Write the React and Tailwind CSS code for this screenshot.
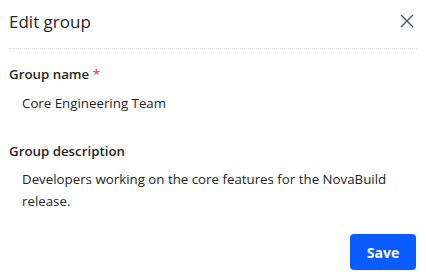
import React from 'react';

const App = () => {
  return (
    <div className="w-[426px] h-[279px] bg-white text-[#1f2328]" style={{ fontFamily: '"Segoe UI", "Open Sans", "Noto Sans", sans-serif' }}>
      <div className="flex items-center justify-between pl-[9px] pr-[12px] pt-[5px] h-[38px]">
        <h2 className="text-[17px] font-normal text-[#242424]">Edit group</h2>
        <button className="text-[#4b5068] mt-[-2px]">
          <svg width="14" height="14" viewBox="0 0 14 14" fill="none" stroke="currentColor" strokeWidth="1.4">
            <path d="M1 1L13 13M13 1L1 13" />
          </svg>
        </button>
      </div>
      <div className="mx-[9px] mt-[10px] border-t border-dotted border-[#d6d8e0]" />

      <div className="px-[9px] pt-[15px]">
        <label className="block text-[13.3px] font-semibold text-[#1f1f1f] leading-[20px]">
          Group name <span className="text-[#e5484d]">*</span>
        </label>
        <p className="pl-[13px] mt-[9px] text-[13.3px] leading-[20px] text-[#242424]">Core Engineering Team</p>

        <label className="block mt-[28px] text-[13.3px] font-semibold text-[#1f1f1f] leading-[20px]">
          Group description
        </label>
        <p className="pl-[13px] mt-[7px] pr-[20px] text-[13.3px] leading-[22px] text-[#242424]">
          Developers working on the core features for the NovaBuild release.
        </p>
      </div>

      <div className="flex justify-end pr-[10px] mt-[22px]">
        <button className="w-[66px] h-[36px] rounded-[4px] bg-[#0b5cff] text-white text-[14px] font-bold">
          Save
        </button>
      </div>
    </div>
  );
};

export default App;
